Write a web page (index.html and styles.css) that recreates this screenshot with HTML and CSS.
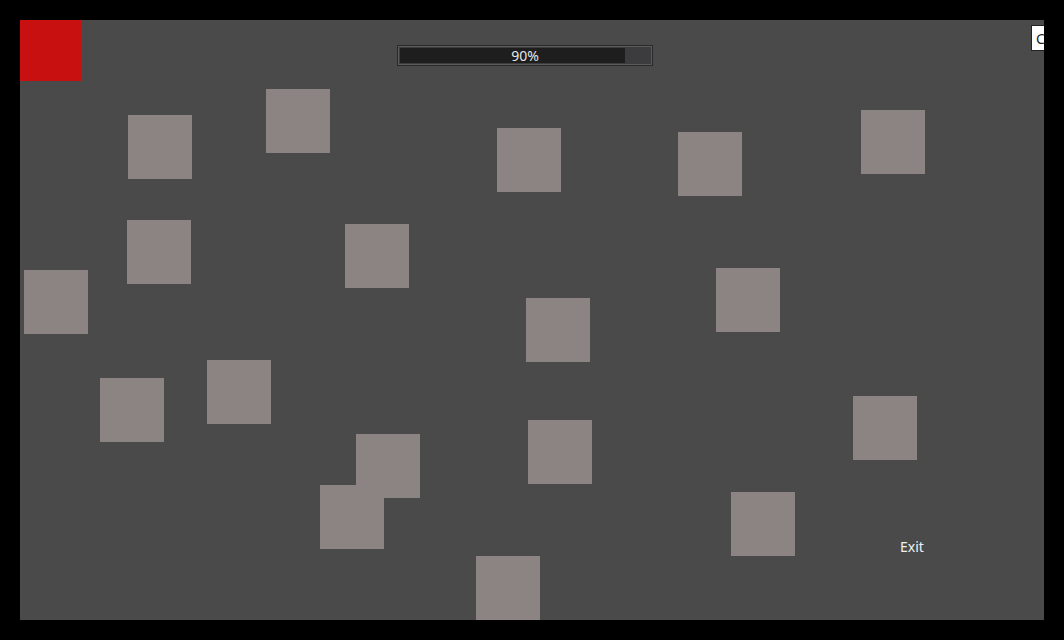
FILE: index.html
```html
<!DOCTYPE html>
<html>
<head>
<meta charset="utf-8">
<link rel="stylesheet" href="styles.css">
</head>
<body>
<div class="stage">
  <div class="player"></div>
  <div class="progress">
    <div class="progress-track">
      <div class="progress-fill" style="width:90%"></div>
    </div>
    <span class="progress-label">90%</span>
  </div>
  <button class="close-btn">Close</button>
  <div class="block" style="left:108px;top:95px"></div>
  <div class="block" style="left:246px;top:69px"></div>
  <div class="block" style="left:477px;top:108px"></div>
  <div class="block" style="left:658px;top:112px"></div>
  <div class="block" style="left:841px;top:90px"></div>
  <div class="block" style="left:107px;top:200px"></div>
  <div class="block" style="left:325px;top:204px"></div>
  <div class="block" style="left:4px;top:250px"></div>
  <div class="block" style="left:696px;top:248px"></div>
  <div class="block" style="left:506px;top:278px"></div>
  <div class="block" style="left:187px;top:340px"></div>
  <div class="block" style="left:80px;top:358px"></div>
  <div class="block" style="left:833px;top:376px"></div>
  <div class="block" style="left:336px;top:414px"></div>
  <div class="block" style="left:300px;top:465px"></div>
  <div class="block" style="left:508px;top:400px"></div>
  <div class="block" style="left:711px;top:472px"></div>
  <div class="block" style="left:456px;top:536px"></div>
  <div class="exit">Exit</div>
</div>
</body>
</html>
```

FILE: styles.css
```css
html, body {
  margin: 0;
  padding: 0;
  background: #000;
}
body {
  padding: 20px;
  font-family: "Noto Sans", sans-serif;
}
.stage {
  position: relative;
  width: 1024px;
  height: 600px;
  background: #4a4a4a;
  overflow: hidden;
}
.player {
  position: absolute;
  left: 0;
  top: 0;
  width: 61px;
  height: 61px;
  background: #c81010;
}
.block {
  position: absolute;
  width: 64px;
  height: 64px;
  background: #8c8482;
}
.progress {
  position: absolute;
  left: 377px;
  top: 25px;
  width: 256px;
  height: 21px;
  box-sizing: border-box;
  border: 1px solid #2a2a2a;
  background: #3c3c3e;
  padding: 2px;
  box-shadow: inset 0 0 0 1px #5a5a5a;
}
.progress-track {
  height: 100%;
}
.progress-fill {
  height: 100%;
  background: #1e1e1f;
}
.progress-label {
  position: absolute;
  left: 0;
  right: 0;
  top: 0;
  bottom: 0;
  display: flex;
  align-items: center;
  justify-content: center;
  color: #e6e6e6;
  font-size: 14px;
  line-height: 1;
}
.close-btn {
  position: absolute;
  left: 1011px;
  top: 5px;
  height: 26px;
  padding: 0 6px 0 4px;
  margin: 0;
  border: 1px solid #222;
  background: #fff;
  color: #222;
  font-family: "Noto Sans", sans-serif;
  font-size: 14px;
  white-space: nowrap;
}
.exit {
  position: absolute;
  left: 880px;
  top: 517px;
  color: #f0f0f0;
  font-size: 14px;
}
```
